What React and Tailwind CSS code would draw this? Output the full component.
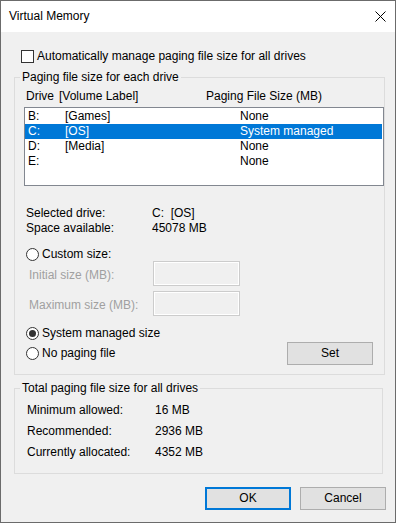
import React from 'react';

const drives = [
  { letter: 'B:', label: '[Games]', size: 'None' },
  { letter: 'C:', label: '[OS]', size: 'System managed', selected: true },
  { letter: 'D:', label: '[Media]', size: 'None' },
  { letter: 'E:', label: '', size: 'None' },
];

function Radio({ checked }) {
  return (
    <span className="w-[13px] h-[13px] rounded-full border border-[#333333] bg-white flex items-center justify-center shrink-0">
      {checked && <span className="w-[7px] h-[7px] rounded-full bg-[#333333]" />}
    </span>
  );
}

function Button({ children, primary, className = '' }) {
  return (
    <div
      className={`w-[86px] h-[23px] flex items-center justify-center bg-[#e1e1e1] ${
        primary ? 'border-2 border-[#0078d7]' : 'border border-[#adadad]'
      } ${className}`}
    >
      {children}
    </div>
  );
}

function DisabledField({ label, className = '' }) {
  return (
    <div className={`flex items-center ${className}`}>
      <span className="ml-[14px] w-[124px] pt-[3px] text-[#a0a0a0]">{label}</span>
      <div className="w-[87px] h-[25px] border border-[#cccccc] shadow-[inset_0_0_0_1px_#ffffff] bg-[#f0f0f0]" />
    </div>
  );
}

export default function App() {
  return (
    <div className="w-[396px] h-[523px] border border-[#6b6b6b] bg-[#f0f0f0] text-black text-[12px] leading-[15px] font-['Liberation_Sans',Arial,sans-serif] flex flex-col overflow-hidden">
      {/* title bar */}
      <div className="h-[31px] bg-white flex items-center justify-between shrink-0">
        <span className="pl-[8px]">Virtual Memory</span>
        <svg width="11" height="11" viewBox="0 0 11 11" className="mr-[9px]">
          <path d="M0.5 0.5 L10.5 10.5 M10.5 0.5 L0.5 10.5" stroke="#000" strokeWidth="1" />
        </svg>
      </div>

      {/* auto manage */}
      <div className="mt-[17px] ml-[20px] h-[15px] flex items-center gap-[3px]">
        <span className="w-[13px] h-[13px] border border-[#333333] bg-white" />
        <span>Automatically manage paging file size for all drives</span>
      </div>

      <fieldset className="mt-[6px] ml-[13px] w-[369px] h-[305px] border border-[#dcdcdc] shrink-0">
        <legend className="ml-[5px] px-[2px] leading-[15px]">Paging file size for each drive</legend>

        <div className="mt-[4px] ml-[11px] flex h-[15px]">
          <span className="w-[33px]">Drive</span>
          <span className="w-[147px]">[Volume Label]</span>
          <span>Paging File Size (MB)</span>
        </div>

        <div className="mt-[3px] ml-[9px] w-[360px] h-[79px] border border-[#828790] bg-white pt-[1px]">
          {drives.map((d) => (
            <div
              key={d.letter}
              className={`h-[15px] flex pl-[3px] mr-[1px] ${d.selected ? 'bg-[#0078d7] text-white' : ''}`}
            >
              <span className="w-[37px]">{d.letter}</span>
              <span className="w-[175px]">{d.label}</span>
              <span>{d.size}</span>
            </div>
          ))}
        </div>

        <div className="mt-[20px] ml-[11px] flex">
          <span className="w-[126px]">Selected drive:</span>
          <span className="whitespace-pre">C:  [OS]</span>
        </div>
        <div className="ml-[11px] flex">
          <span className="w-[126px]">Space available:</span>
          <span>45078 MB</span>
        </div>

        <div className="mt-[11px] ml-[11px] h-[14px] flex items-center gap-[3px]">
          <Radio />
          <span>Custom size:</span>
        </div>
        <DisabledField label="Initial size (MB):" />
        <DisabledField label="Maximum size (MB):" className="mt-[5px]" />

        <div className="mt-[10px] ml-[11px] h-[15px] flex items-center gap-[3px]">
          <Radio checked />
          <span>System managed size</span>
        </div>
        <div className="mt-[1px] ml-[11px] flex items-center">
          <div className="flex items-center gap-[3px]">
            <Radio />
            <span>No paging file</span>
          </div>
          <Button className="ml-auto mr-[11px]">Set</Button>
        </div>
      </fieldset>

      <fieldset className="mt-[6px] ml-[13px] w-[369px] h-[93px] border border-[#dcdcdc] shrink-0">
        <legend className="ml-[5px] px-[2px] leading-[15px]">Total paging file size for all drives</legend>
        <div className="mt-[4px] ml-[12px] flex flex-col">
          {[
            ['Minimum allowed:', '16 MB'],
            ['Recommended:', '2936 MB'],
            ['Currently allocated:', '4352 MB'],
          ].map(([k, v]) => (
            <div key={k} className="h-[21px] flex items-center">
              <span className="w-[128px]">{k}</span>
              <span>{v}</span>
            </div>
          ))}
        </div>
      </fieldset>

      <div className="mt-[13px] mr-[9px] flex justify-end gap-[9px]">
        <Button primary>OK</Button>
        <Button>Cancel</Button>
      </div>
    </div>
  );
}
